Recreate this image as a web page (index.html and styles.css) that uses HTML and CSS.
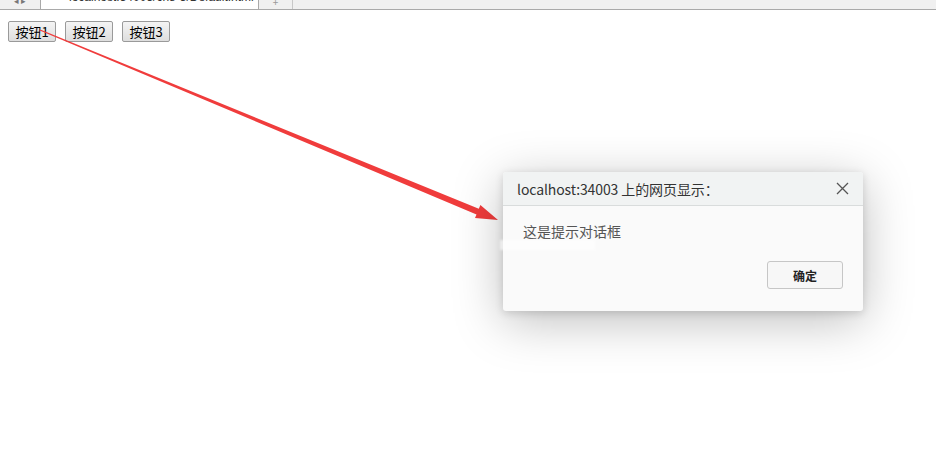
FILE: index.html
```html
<!DOCTYPE html>
<html lang="zh-CN">
<head>
<meta charset="utf-8">
<title>按钮</title>
<link rel="stylesheet" href="styles.css">
</head>
<body>
<div class="tabbar">
  <div class="tab-nav"><span class="nav-glyph">◂ ▸</span></div>
  <div class="tab-active"><span class="tab-title">localhost:34003/ch8-3/Default.html</span></div>
  <div class="tab-new">+</div>
  <div class="tab-rest"></div>
</div>
<div class="page">
  <div class="buttons">
    <button class="btn">按钮1</button>
    <button class="btn">按钮2</button>
    <button class="btn">按钮3</button>
  </div>
</div>

<svg class="arrow" width="936" height="465" viewBox="0 0 936 465">
  <polygon points="40.3,29.6 478.8,208.8 480.4,205.1 498,220 475,218.1 476.5,214.4 39.7,30.4" fill="#f03c3c"/>
</svg>

<div class="smudge smudge-a"></div>
<div class="smudge smudge-b"></div>

<div class="dialog">
  <div class="dialog-head">
    <span class="dialog-title">localhost:34003 上的网页显示：</span>
    <svg class="close" width="13" height="13" viewBox="0 0 13 13"><path d="M1 1L12 12M12 1L1 12" stroke="#555" stroke-width="1.3" fill="none"/></svg>
  </div>
  <div class="dialog-body">
    <p class="dialog-msg">这是提示对话框</p>
    <div class="dialog-actions"><button class="ok">确定</button></div>
  </div>
</div>
</body>
</html>
```

FILE: styles.css
```css
html, body {
  margin: 0;
  padding: 0;
  background: #fff;
  width: 936px;
  height: 465px;
  overflow: hidden;
  font-family: "Noto Sans CJK SC", "Liberation Sans", sans-serif;
}

.tabbar {
  display: flex;
  height: 10px;
  background: #f0f0f0;
  border-bottom: 1px solid #a9a9a9;
  box-sizing: border-box;
  overflow: hidden;
}
.tab-nav {
  width: 41px;
  display: flex;
  justify-content: center;
  align-items: flex-end;
  font-size: 9px;
  line-height: 9px;
  color: #777;
  border-right: 1px solid #a9a9a9;
  box-sizing: border-box;
}
.nav-glyph { transform: translateY(-4px); }
.tab-active {
  width: 218px;
  background: #fff;
  border-right: 1px solid #a9a9a9;
  box-sizing: border-box;
  margin-bottom: -1px;
  display: flex;
  align-items: flex-end;
  padding-left: 28px;
  overflow: hidden;
}
.tab-title {
  font-family: "Liberation Sans", sans-serif;
  font-size: 12px;
  line-height: 12px;
  color: #333;
  white-space: nowrap;
  transform: translateY(-7px);
}
.tab-new {
  width: 34px;
  border-right: 1px solid #c8c8c8;
  box-sizing: border-box;
  color: #999;
  font-size: 10px;
  line-height: 4px;
  text-align: center;
}
.tab-rest { flex: 1; }

.page { padding: 11px 8px 0; }
.buttons { display: flex; gap: 9px; }
.btn {
  width: 48px;
  height: 21px;
  padding: 0;
  font-family: "Noto Sans CJK SC", sans-serif;
  font-size: 13px;
  line-height: 19px;
  color: #000;
  background: linear-gradient(#f4f4f4, #dedede);
  border: 1px solid #9a9a9a;
  border-radius: 2px;
}

.arrow {
  position: absolute;
  left: 0;
  top: 0;
  pointer-events: none;
}

.dialog {
  position: absolute;
  left: 503px;
  top: 172px;
  width: 360px;
  height: 139px;
  background: #fafafa;
  border-radius: 3px;
  box-shadow: 0 10px 50px rgba(0, 0, 0, 0.26), 0 2px 8px rgba(0, 0, 0, 0.14);
  display: flex;
  flex-direction: column;
  overflow: hidden;
}
.dialog-head {
  height: 34px;
  background: #f1f3f3;
  border-bottom: 1px solid #d9dcdc;
  box-sizing: border-box;
  display: flex;
  align-items: center;
  justify-content: space-between;
  padding: 0 14px 0 14px;
}
.dialog-title {
  font-size: 14px;
  color: #333;
  letter-spacing: -0.1px;
}
.close { display: block; margin-top: 0; }
.dialog-body {
  flex: 1;
  display: flex;
  flex-direction: column;
  padding: 0 20px 0 20px;
}
.dialog-msg {
  margin: 13px 0 0;
  font-size: 14px;
  line-height: 24px;
  color: #555;
}
.dialog-actions {
  display: flex;
  justify-content: flex-end;
  margin-top: 18px;
}
.ok {
  width: 76px;
  height: 28px;
  font-family: "Noto Sans CJK SC", sans-serif;
  font-size: 12px;
  font-weight: bold;
  color: #222;
  background: #f7f7f7;
  border: 1px solid #c6c6c6;
  border-radius: 3px;
}

.smudge {
  position: absolute;
  background: #fff;
  filter: blur(1px);
}
.smudge-a {
  left: 468px;
  top: 226px;
  width: 32px;
  height: 60px;
  transform: skewX(-8deg);
}
.smudge-b {
  left: 500px;
  top: 240px;
  width: 95px;
  height: 10px;
  z-index: 2;
  opacity: 0.6;
}
```
